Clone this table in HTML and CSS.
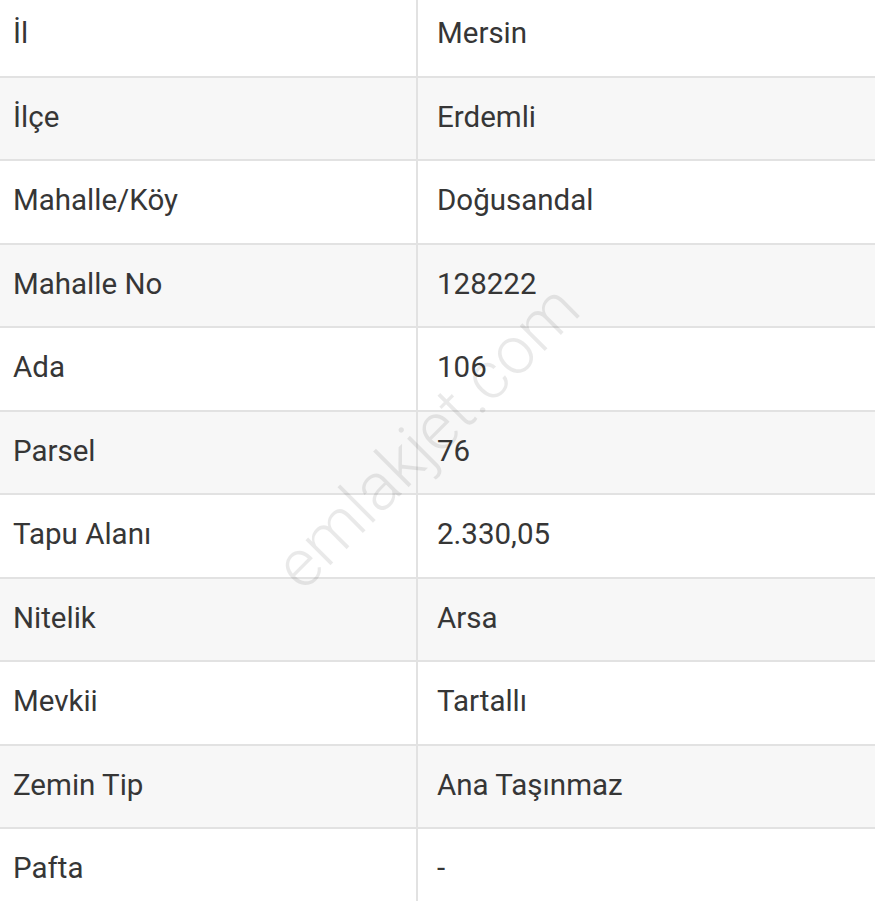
FILE: index.html
```html
<!DOCTYPE html>
<html lang="tr">
<head>
<meta charset="utf-8">
<title>Tapu Bilgileri</title>
<link rel="stylesheet" href="styles.css">
</head>
<body>
<div class="page">
  <div class="table">
    <div class="row first"><div class="key">İl</div><div class="val">Mersin</div></div>
    <div class="row alt"><div class="key">İlçe</div><div class="val">Erdemli</div></div>
    <div class="row"><div class="key">Mahalle/Köy</div><div class="val">Doğusandal</div></div>
    <div class="row alt"><div class="key">Mahalle No</div><div class="val">128222</div></div>
    <div class="row"><div class="key">Ada</div><div class="val">106</div></div>
    <div class="row alt"><div class="key">Parsel</div><div class="val">76</div></div>
    <div class="row"><div class="key">Tapu Alanı</div><div class="val">2.330,05</div></div>
    <div class="row alt"><div class="key">Nitelik</div><div class="val">Arsa</div></div>
    <div class="row"><div class="key">Mevkii</div><div class="val">Tartallı</div></div>
    <div class="row alt"><div class="key">Zemin Tip</div><div class="val">Ana Taşınmaz</div></div>
    <div class="row last"><div class="key">Pafta</div><div class="val">-</div></div>
  </div>
  <div class="watermark">emlakjet.com</div>
</div>
</body>
</html>
```

FILE: styles.css
```css
html, body {
  margin: 0;
  padding: 0;
  background: #ffffff;
}
body {
  width: 875px;
  height: 901px;
  overflow: hidden;
  font-family: Roboto, "Noto Sans", sans-serif;
  color: #363636;
}
.page {
  position: relative;
  width: 875px;
  height: 901px;
  overflow: hidden;
}
.table {
  display: flex;
  flex-direction: column;
}
.row {
  display: grid;
  grid-template-columns: 418px 1fr;
  border-bottom: 2px solid #e2e2e2;
  background: #ffffff;
  font-size: 29.5px;
  line-height: 34px;
}
.row.alt {
  background: #f7f7f7;
}
.row.last {
  border-bottom: none;
}
.key, .val {
  padding-top: 22px;
  padding-bottom: 25.44px;
}
.row.first .key, .row.first .val {
  padding-top: 16px;
  padding-bottom: 26px;
}
.key {
  padding-left: 13px;
  border-right: 2px solid #e2e2e2;
}
.val {
  padding-left: 19px;
}
.watermark {
  position: absolute;
  left: 427px;
  top: 437px;
  transform: translate(-50%, -50%) rotate(-45deg);
  font-family: Roboto, sans-serif;
  font-weight: 300;
  font-size: 67px;
  line-height: 1;
  color: rgba(0, 0, 0, 0.085);
  white-space: nowrap;
  pointer-events: none;
}
```
